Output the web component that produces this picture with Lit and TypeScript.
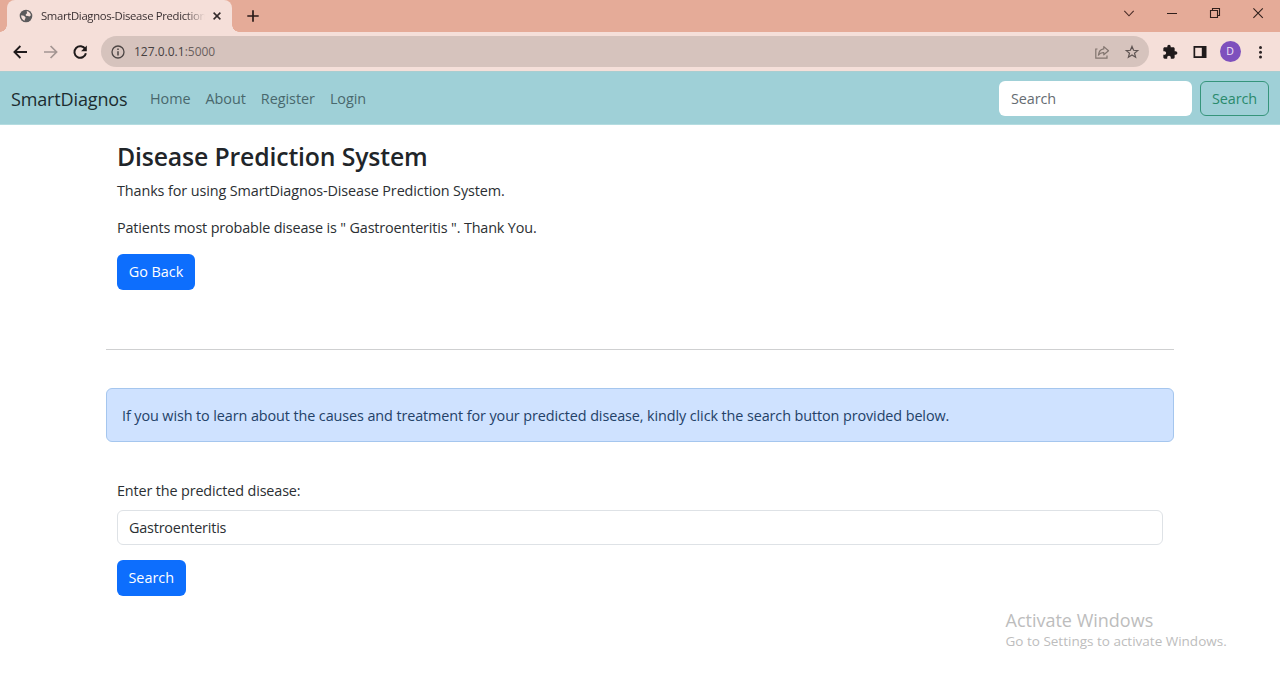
import { LitElement, html, css, svg } from "lit";
import { customElement } from "lit/decorators.js";

const globe = svg`<circle cx="8" cy="8" r="7.200" fill="#5b5a5c"/><path d="M2.400 7.200 C4.400 7.400 5.400 7.600 6.600 8.700 C8 9.800 7.600 10.800 6.800 11.400 L6.400 13.500 C4.200 12.800 2.300 10.500 2.400 7.200Z M8.800 2.300 C11.200 2.600 13.300 4.600 13.600 7.200 L12 8.600 L10 8 L7.800 7.600 L7.800 5.800 L9.200 5Z" fill="#f5dfd9"/>`;

@customElement("browser-chrome")
class BrowserChrome extends LitElement {
  static styles = css`
    :host { display: block; font-family: "Open Sans", "Noto Sans", sans-serif; }
    svg { display: block; flex: none; }
    .strip { display: flex; height: 32px; background: #e5ab98; }
    .flare { width: 7px; height: 7px; align-self: flex-end; background: radial-gradient(circle at 0 0, transparent 6.5px, #f5dfd9 7px); }
    .flare.right { background: radial-gradient(circle at 100% 0, transparent 6.5px, #f5dfd9 7px); }
    .tab {
      display: flex; align-items: center; width: 225px; height: 32px;
      padding: 0 10px 0 12px; box-sizing: border-box; background: #f5dfd9; border-radius: 8px 8px 0 0;
    }
    .title {
      width: 164px; margin: 0 7px 0 8px; overflow: hidden; white-space: nowrap; font-size: 11.3px;
      letter-spacing: -0.32px; color: #3a3032; line-height: 18px;
      -webkit-mask-image: linear-gradient(to right, #000 88%, transparent);
      mask-image: linear-gradient(to right, #000 88%, transparent);
    }
    .plus { margin: 9px 0 0 7px; }
    .controls { display: flex; margin-left: auto; padding: 5px 14px 0 0; gap: 27px; }
    .bar { display: flex; align-items: center; height: 39px; background: #f5dfd9; padding: 0 12px 0 12px; box-sizing: border-box; }
    .nav { display: flex; gap: 14px; margin-right: 13px; }
    .address { display: flex; align-items: center; height: 31px; flex: 1; border-radius: 16px; background: #d6c3bd; box-sizing: border-box; padding: 0 9px; }
    .url { margin-left: 8px; font-size: 12px; color: #45403f; white-space: nowrap; }
    .port { color: #6a605e; }
    .actions { display: flex; gap: 14px; margin-left: auto; }
    .tools { display: flex; align-items: center; gap: 14px; margin: 0 0 0 13px; }
    .avatar { width: 21px; height: 21px; margin: 0 -2.5px; border-radius: 50%; background: #7e50bd; color: #f2e6fa; font-size: 10.5px; line-height: 21px; text-align: center; }
  `;

  render() {
    return html`
      <div class="strip">
        <div class="flare"></div>
        <div class="tab">
          <svg width="14" height="14" viewBox="0 0 16 16">${globe}</svg>
          <span class="title">SmartDiagnos-Disease Prediction System</span>
          <svg width="10" height="10" viewBox="0 0 10 10"><path d="M1.600 1.600 8.400 8.400M8.400 1.600 1.600 8.400" stroke="#33292a" stroke-width="1.500"/></svg>
        </div>
        <div class="flare right"></div>
        <svg class="plus" width="14" height="14" viewBox="0 0 14 14"><path d="M7 1.300V12.700M1.300 7H12.700" stroke="#2a1a18" stroke-width="1.700"/></svg>
        <div class="controls">
          <svg width="16" height="16" viewBox="0 0 16 16"><path d="M3.300 5.800 8 10.800 12.700 5.800" fill="none" stroke="#4a2c27" stroke-width="1.100"/></svg>
          <svg width="16" height="16" viewBox="0 0 16 16"><path d="M3 8.500H13" stroke="#30201c"/></svg>
          <svg width="16" height="16" viewBox="0 0 16 16"><path d="M3.500 5.500H10.500V12.500H3.500ZM5.500 5.200V3.500H12.500V10.500H10.800" fill="none" stroke="#30201c" stroke-width="1.100"/></svg>
          <svg width="16" height="16" viewBox="0 0 16 16"><path d="M3.400 3.400 12.800 12.800M12.800 3.400 3.400 12.800" stroke="#30201c" stroke-width="1.100"/></svg>
        </div>
      </div>
      <div class="bar">
        <div class="nav">
          <svg width="16" height="16" viewBox="0 0 16 16"><path d="M15 8H2.800M8.400 2 2.400 8 8.400 14" fill="none" stroke="#1f1a1b" stroke-width="1.800"/></svg>
          <svg width="16" height="16" viewBox="0 0 16 16"><path d="M2 8H14.200M8.600 2 14.600 8 8.600 14" fill="none" stroke="#a39592" stroke-width="1.700"/></svg>
          <svg width="16" height="16" viewBox="0 0 16 16"><path d="M13.300 5.200A5.800 5.800 0 1 0 13.900 9.200" fill="none" stroke="#1f1a1b" stroke-width="2"/><path d="M14.800 1.500V7.200H9.100Z" fill="#1f1a1b"/></svg>
        </div>
        <div class="address">
          <svg width="16" height="16" viewBox="0 0 16 16"><circle cx="8" cy="8" r="6" fill="none" stroke="#4c4544" stroke-width="1.300"/><path d="M8 7.200V11.400M8 4.600V6" stroke="#4c4544" stroke-width="1.500"/></svg>
          <span class="url">127.0.0.1<span class="port">:5000</span></span>
          <div class="actions">
            <svg width="16" height="16" viewBox="0 0 16 16"><path d="M3.500 5H1.800V14.200H13V11.500" fill="none" stroke="#82756f" stroke-width="1.200"/><path d="M9.800 2.600 14.500 6.800 9.800 10.800V8.600C7.200 8.400 5.600 9.300 4.400 11.200 4.700 7.800 6.600 5.300 9.800 4.900Z" fill="none" stroke="#82756f" stroke-width="1.200" stroke-linejoin="round"/></svg>
            <svg width="16" height="16" viewBox="0 0 16 16"><path d="M8 2.400 9.600 6.300 13.700 6.600 10.500 9.200 11.600 13.200 8 11 4.400 13.200 5.500 9.200 2.300 6.600 6.400 6.300Z" fill="none" stroke="#5e5452" stroke-width="1.200"/></svg>
          </div>
        </div>
        <div class="tools">
          <svg width="16" height="16" viewBox="0 0 24 24"><path d="M20.500 11H19V7c0-1.100-.9-2-2-2h-4V3.500C13 2.120 11.880 1 10.500 1S8 2.120 8 3.500V5H4c-1.100 0-1.990.9-1.990 2v3.800H3.500c1.490 0 2.700 1.210 2.700 2.700s-1.210 2.700-2.700 2.700H2V20c0 1.100.9 2 2 2h3.800v-1.500c0-1.490 1.210-2.700 2.700-2.700s2.700 1.210 2.700 2.700V22H17c1.100 0 2-.9 2-2v-4h1.500c1.380 0 2.500-1.120 2.500-2.500S21.880 11 20.500 11z" fill="#1f1a1b"/></svg>
          <svg width="16" height="16" viewBox="0 0 16 16"><path d="M1.500 2H14.500V14H1.500Z" fill="#1f1a1b"/><path d="M3.200 3.800H9.800V12.200H3.200Z" fill="#f5dfd9"/></svg>
          <div class="avatar">D</div>
          <svg width="16" height="16" viewBox="0 0 16 16"><g fill="#2b2324"><circle cx="8.500" cy="3.500" r="1.500"/><circle cx="8.500" cy="8.300" r="1.500"/><circle cx="8.500" cy="13" r="1.500"/></g></svg>
        </div>
      </div>
    `;
  }
}

@customElement("app-root")
class AppRoot extends LitElement {
  static styles = css`
    :host {
      display: block; width: 1280px; height: 680px; overflow: hidden; position: relative; background: #fff;
      font-family: "Open Sans", "Noto Sans", sans-serif; font-size: 14.4px; line-height: 22px; color: #2b2f33; white-space: nowrap;
    }
    browser-chrome { margin-right: 0; }
    .navbar { display: flex; align-items: center; height: 54px; padding: 0 11px; box-sizing: border-box; background: #9fd0d7; border-bottom: 1px solid #b4dce0; border-top: 1px solid #a9cdd0; }
    .brand { width: 139px; padding-top: 2px; font-size: 18px; letter-spacing: -0.14px; color: #1c2c2f; }
    .links { display: flex; gap: 15px; padding-top: 2px; letter-spacing: -0.04px; color: #49686d; }
    .search { display: flex; gap: 8px; margin-left: auto; }
    .field { box-sizing: border-box; height: 35px; padding: 7px 12px 6px; border-radius: 6px; background: #fff; }
    .query { width: 193px; color: #656c72; letter-spacing: -0.1px; }
    .button { display: flex; align-items: center; justify-content: center; box-sizing: border-box; height: 36px; border-radius: 6px; color: #fff; background: #0d6efd; }
    .outline { width: 69px; height: 35px; padding-top: 2px; background: none; border: 1px solid #36957b; color: #2a8a6c; letter-spacing: -0.1px; }
    .page { width: 1068px; margin: 0 auto; }
    .section { padding: 0 11px; }
    h2 { margin: 0; padding-top: 15px; font-size: 24.8px; line-height: 32px; font-weight: 600; letter-spacing: -0.15px; color: #212529; }
    p { margin: 0; }
    .thanks { margin-top: 8px; letter-spacing: -0.105px; }
    .result { margin-top: 15px; letter-spacing: -0.15px; }
    .back { width: 78px; margin-top: 15px; }
    .rule { height: 1px; margin-top: 59px; background: #cfd0d1; }
    .alert { height: 54px; margin-top: 38px; box-sizing: border-box; padding: 16px 15px; border: 1px solid #a5c6ee; border-radius: 6px; background: #cfe2ff; color: #234168; letter-spacing: -0.097px; }
    .label { margin-top: 38px; letter-spacing: -0.14px; }
    .disease { height: 35px; margin-top: 8px; border: 1px solid #dee2e6; padding: 6px 11px; letter-spacing: -0.2px; }
    .go { width: 68.5px; margin-top: 15px; }
    .watermark { position: absolute; left: 1005.5px; top: 609px; color: #bdbdbd; }
    .activate { font-size: 18px; line-height: 23px; }
    .settings { font-size: 13.5px; line-height: 19px; }
  `;

  render() {
    return html`
      <browser-chrome></browser-chrome>
      <nav class="navbar">
        <span class="brand">SmartDiagnos</span>
        <div class="links"><span>Home</span><span>About</span><span>Register</span><span>Login</span></div>
        <div class="search"><div class="field query">Search</div><div class="button outline">Search</div></div>
      </nav>
      <main class="page">
        <section class="section">
          <h2>Disease Prediction System</h2>
          <p class="thanks">Thanks for using SmartDiagnos-Disease Prediction System.</p>
          <p class="result">Patients most probable disease is " Gastroenteritis ". Thank You.</p>
          <div class="button back">Go Back</div>
        </section>
        <div class="rule"></div>
        <div class="alert"><span>If you wish to learn about the causes and treatment for your predicted disease, kindly click the search button provided below.</span></div>
        <section class="section">
          <p class="label"><span>Enter the predicted disease:</span></p>
          <div class="field disease">Gastroenteritis</div>
          <div class="button go">Search</div>
        </section>
      </main>
      <aside class="watermark"><div class="activate">Activate Windows</div><div class="settings">Go to Settings to activate Windows.</div></aside>
    `;
  }
}
